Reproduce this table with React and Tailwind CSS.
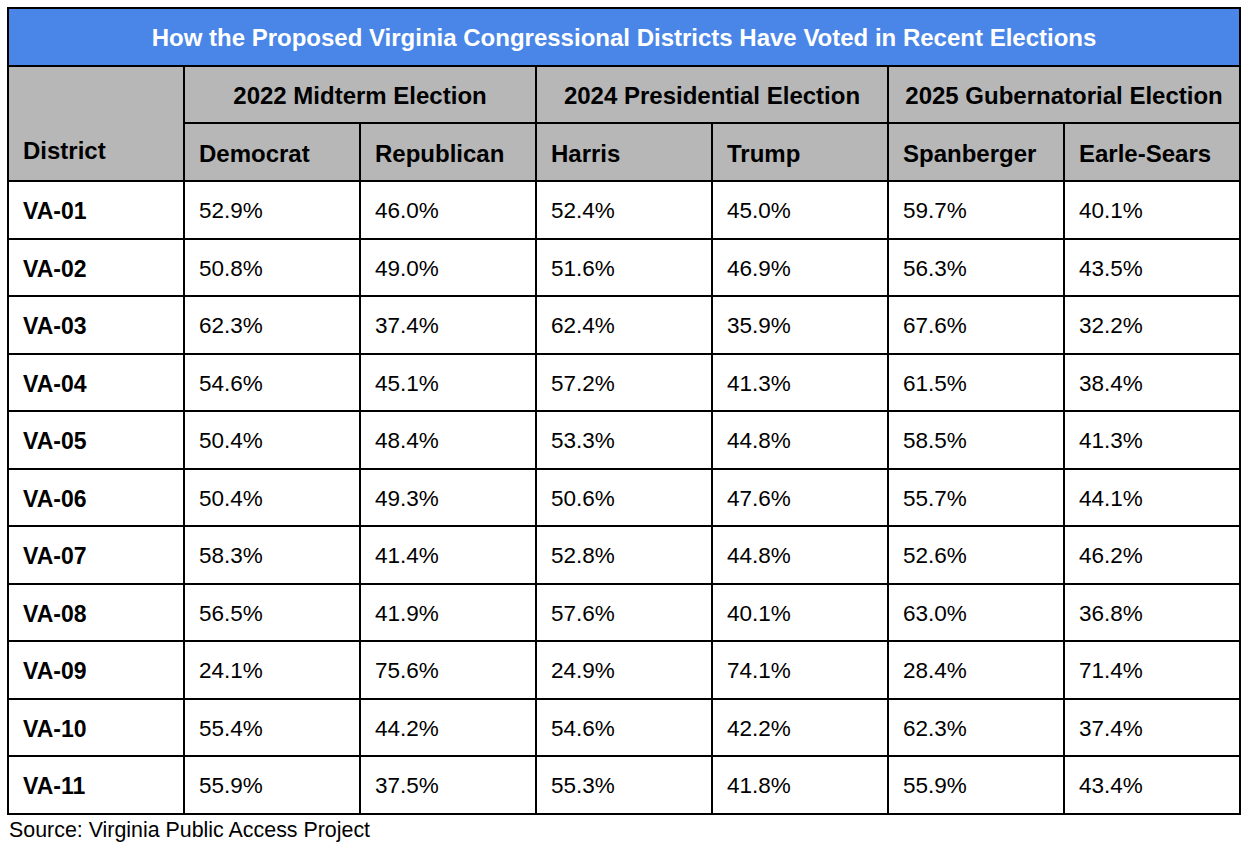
import React from "react";

const rows = [
  ["VA-01", "52.9%", "46.0%", "52.4%", "45.0%", "59.7%", "40.1%"],
  ["VA-02", "50.8%", "49.0%", "51.6%", "46.9%", "56.3%", "43.5%"],
  ["VA-03", "62.3%", "37.4%", "62.4%", "35.9%", "67.6%", "32.2%"],
  ["VA-04", "54.6%", "45.1%", "57.2%", "41.3%", "61.5%", "38.4%"],
  ["VA-05", "50.4%", "48.4%", "53.3%", "44.8%", "58.5%", "41.3%"],
  ["VA-06", "50.4%", "49.3%", "50.6%", "47.6%", "55.7%", "44.1%"],
  ["VA-07", "58.3%", "41.4%", "52.8%", "44.8%", "52.6%", "46.2%"],
  ["VA-08", "56.5%", "41.9%", "57.6%", "40.1%", "63.0%", "36.8%"],
  ["VA-09", "24.1%", "75.6%", "24.9%", "74.1%", "28.4%", "71.4%"],
  ["VA-10", "55.4%", "44.2%", "54.6%", "42.2%", "62.3%", "37.4%"],
  ["VA-11", "55.9%", "37.5%", "55.3%", "41.8%", "55.9%", "43.4%"],
];

const elections = ["2022 Midterm Election", "2024 Presidential Election", "2025 Gubernatorial Election"];
const candidates = ["Democrat", "Republican", "Harris", "Trump", "Spanberger", "Earle-Sears"];

export default function App() {
  return (
    <div className="bg-white w-[1248px] h-[850px] pt-[7px] pl-[7px] font-['Liberation_Sans',Arial,sans-serif] text-black">
      <table className="border-collapse table-fixed w-[1233px]">
        <colgroup>
          {Array.from({ length: 7 }).map((_, i) => (
            <col key={i} className="w-[176px]" />
          ))}
        </colgroup>
        <thead>
          <tr className="h-[58px]">
            <th colSpan={7} className="border-2 border-black bg-[#4a86e8] text-white text-[24px] leading-[28px] font-bold text-center align-middle pt-[2px]">
              How the Proposed Virginia Congressional Districts Have Voted in Recent Elections
            </th>
          </tr>
          <tr className="h-[57px]">
            <th rowSpan={2} className="border-2 border-black bg-[#b7b7b7] text-[24px] leading-[28px] font-bold text-left align-bottom pl-[14px] pb-[15px]">
              District
            </th>
            {elections.map((e) => (
              <th key={e} colSpan={2} className="border-2 border-black bg-[#b7b7b7] text-[24px] leading-[28px] font-bold text-center align-middle pt-[2px]">
                {e}
              </th>
            ))}
          </tr>
          <tr className="h-[58px]">
            {candidates.map((c) => (
              <th key={c} className="border-2 border-black bg-[#b7b7b7] text-[24px] leading-[28px] font-bold text-left align-middle pl-[14px] pt-[3px]">
                {c}
              </th>
            ))}
          </tr>
        </thead>
        <tbody>
          {rows.map((r) => (
            <tr key={r[0]} className="h-[57.5px]">
              {r.map((v, i) => (
                <td
                  key={i}
                  className={`border-2 border-black leading-[26px] text-left align-middle pl-[14px] pt-[3px] ${i === 0 ? "font-bold text-[23px]" : "text-[22.5px]"}`}
                >
                  {v}
                </td>
              ))}
            </tr>
          ))}
        </tbody>
      </table>
      <p className="text-[21.4px] leading-[24px] pl-[2px] pt-[3px]">Source: Virginia Public Access Project</p>
    </div>
  );
}
